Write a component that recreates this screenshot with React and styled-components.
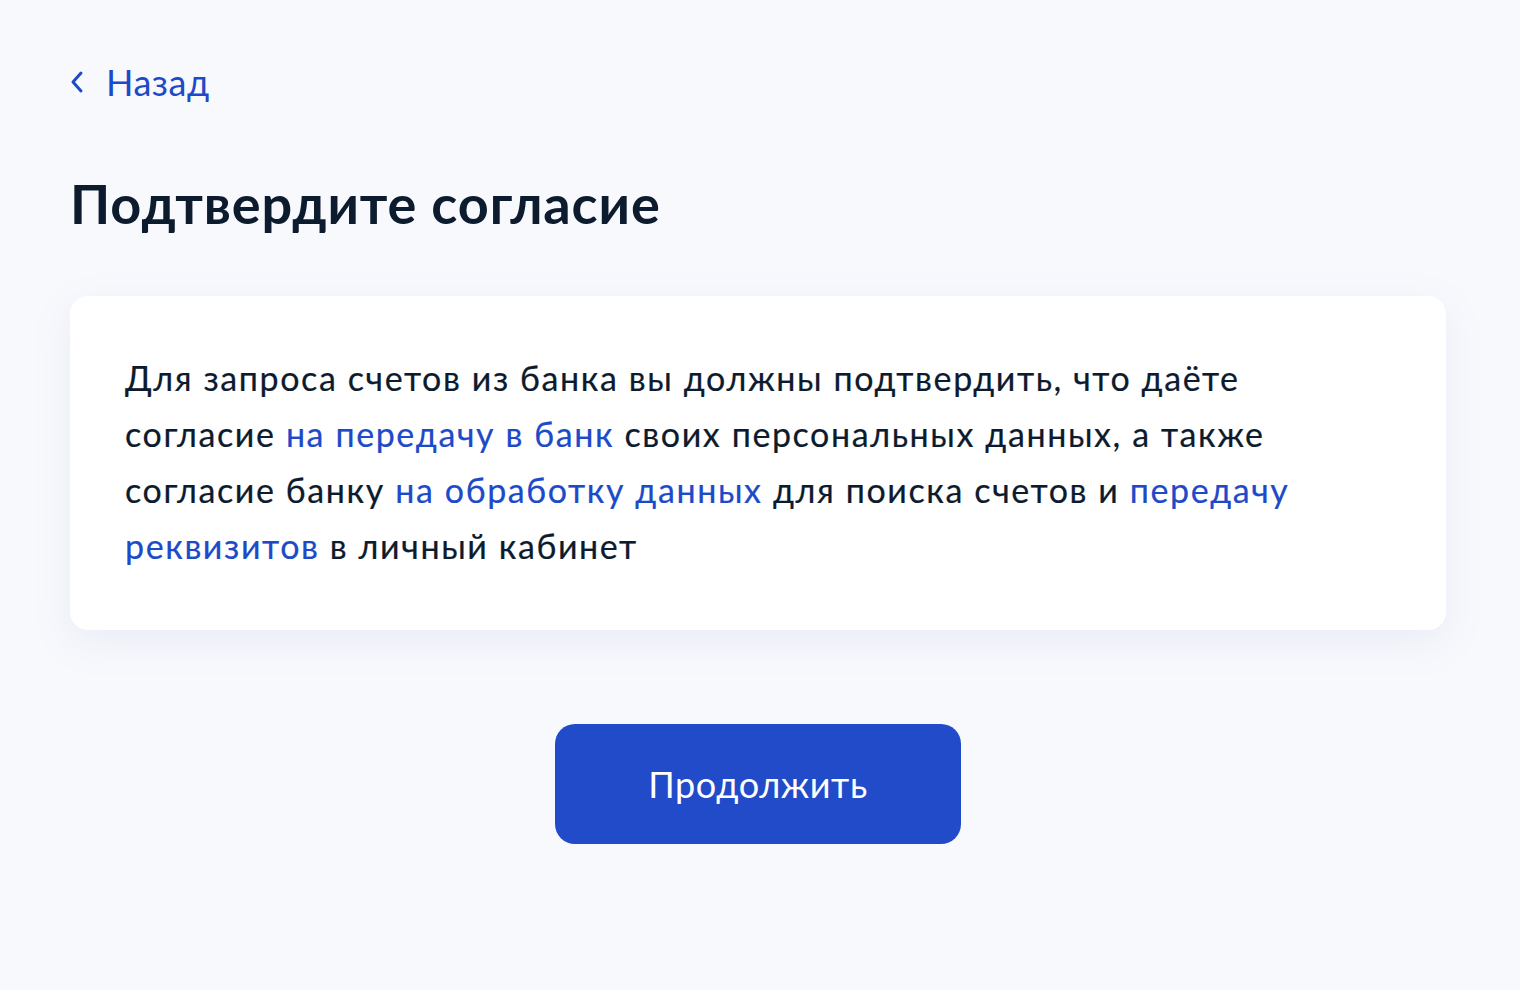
import React from 'react'
import styled, { createGlobalStyle } from 'styled-components'

const GlobalStyle = createGlobalStyle`
  html, body {
    margin: 0;
    padding: 0;
    background: #f8f9fd;
    font-family: Lato, "Noto Sans", sans-serif;
    color: #0d1b2e;
  }
`

const Page = styled.div`
  min-height: 990px;
  box-sizing: border-box;
  padding: 58px 74px 0 70px;
  display: flex;
  flex-direction: column;
`

const BackLink = styled.a`
  display: inline-flex;
  align-items: center;
  gap: 22px;
  align-self: flex-start;
  color: #1d4ac9;
  font-size: 36px;
  line-height: 48px;
  letter-spacing: 0.5px;
  text-decoration: none;
  cursor: pointer;
`

const Title = styled.h1`
  margin: 66px 0 0;
  font-size: 54px;
  line-height: 64px;
  font-weight: 700;
  letter-spacing: 0.9px;
  color: #0d1b2e;
`

const Card = styled.div`
  margin-top: 60px;
  background: #fff;
  border-radius: 18px;
  padding: 54px 55px 56px;
  box-shadow: 0 12px 40px rgba(104, 130, 190, 0.1);
`

const Text = styled.p`
  margin: 0;
  font-size: 34px;
  line-height: 56px;
  letter-spacing: 1.6px;
  color: #0d1b2e;
  -webkit-text-stroke: 0.2px #0d1b2e;
`

const Link = styled.a`
  color: #1d4ac9;
  -webkit-text-stroke: 0.2px #1d4ac9;
  text-decoration: none;
  cursor: pointer;
`

const Actions = styled.div`
  display: flex;
  justify-content: center;
  margin-top: 94px;
`

const Button = styled.button`
  width: 406px;
  height: 120px;
  border: none;
  border-radius: 20px;
  background: #214bc8;
  color: #fff;
  font-family: Lato, "Noto Sans", sans-serif;
  font-size: 36px;
  letter-spacing: 0.6px;
  cursor: pointer;
`

function Chevron() {
  return (
    <svg width="14" height="24" viewBox="0 0 14 24" fill="none">
      <path d="M11 3 L3 12 L11 21" stroke="currentColor" strokeWidth="3" strokeLinecap="round" strokeLinejoin="round" />
    </svg>
  )
}

export default function App() {
  return (
    <>
      <GlobalStyle />
      <Page>
        <BackLink>
          <Chevron />
          Назад
        </BackLink>
        <Title>Подтвердите согласие</Title>
        <Card>
          <Text>
            Для запроса счетов из банка вы должны подтвердить, что даёте согласие{' '}
            <Link>на передачу в банк</Link> своих персональных данных, а также согласие банку{' '}
            <Link>на обработку данных</Link> для поиска счетов и{' '}
            <Link>передачу реквизитов</Link> в личный кабинет
          </Text>
        </Card>
        <Actions>
          <Button>Продолжить</Button>
        </Actions>
      </Page>
    </>
  )
}
